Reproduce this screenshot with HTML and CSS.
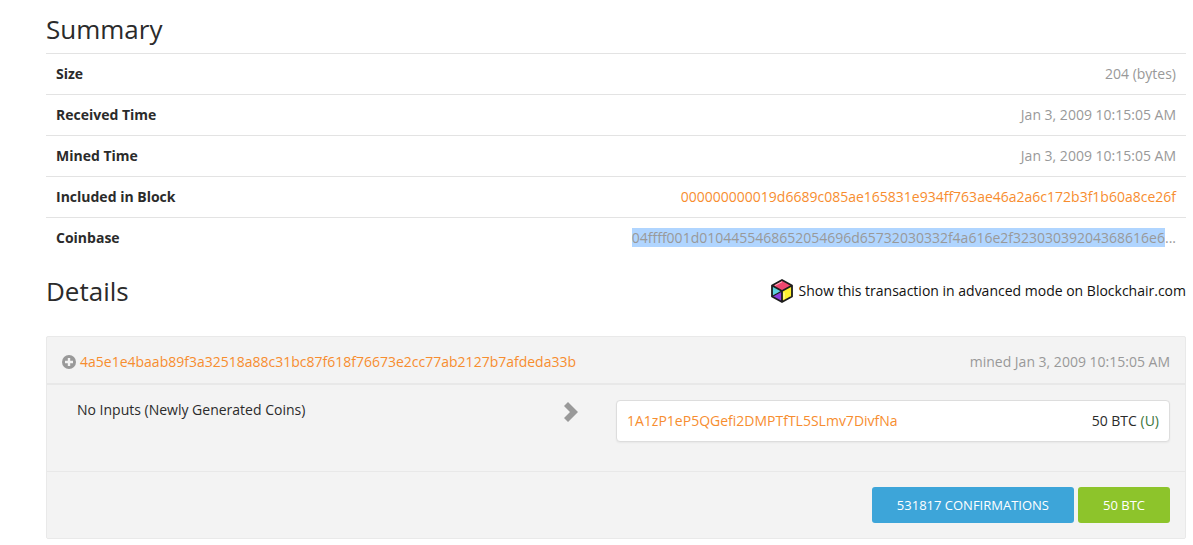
FILE: index.html
```
<!DOCTYPE html>
<html lang="en">
<head>
    <meta charset="UTF-8">
    <meta name="viewport" content="width=device-width, initial-scale=1.0">
    <title>Bitcoin Transaction</title>
    <link rel="stylesheet" href="styles.css">
</head>
<body>

    <h2>Summary</h2>
    <table class="summary">
        <tr>
            <th scope="row">Size</th>
            <td>204 (bytes)</td>
        </tr>
        <tr>
            <th scope="row">Received Time</th>
            <td>Jan 3, 2009 10:15:05 AM</td>
        </tr>
        <tr>
            <th scope="row">Mined Time</th>
            <td>Jan 3, 2009 10:15:05 AM</td>
        </tr>
        <tr>
            <th scope="row">Included in Block</th>
            <td><a href="#">000000000019d6689c085ae165831e934ff763ae46a2a6c172b3f1b60a8ce26f</a></td>
        </tr>
        <tr>
            <th scope="row">Coinbase</th>
            <td><span class="selected">04ffff001d0104455468652054696d65732030332f4a616e2f32303039204368616e6</span>...</td>
        </tr>
    </table>

    <div class="details-header">
        <h2>Details</h2>
        <a class="blockchair" href="#">
            <svg width="24" height="26" viewBox="0 0 24 26">
                <path d="M12 2 22 7.500 12 13 2 7.500Z" fill="#ef476f"/>
                <path d="M12 13 22 7.500V18.500L12 24Z" fill="#fff02e"/>
                <path d="M2 7.500 12 13 2 18.500Z" fill="#5fd3e0"/>
                <path d="M12 13V24L2 18.500Z" fill="#8b3fe0"/>
                <path d="M12 2 22 7.500V18.500L12 24 2 18.500V7.500Z M2 7.500 12 13 22 7.500 M12 13V24" fill="none" stroke="#1d1d1d" stroke-width="1.800" stroke-linejoin="round"/>
                <path d="M12 13 2 18.500" stroke="#1d1d1d" stroke-width="1.200"/>
                <path d="M5 7.500 12 3.800" stroke="#f9b3c3" stroke-width="1"/>
                <path d="M14 14.500V21" stroke="#fffbc0" stroke-width="1"/>
            </svg>
            Show this transaction in advanced mode on Blockchair.com
        </a>
    </div>

    <div class="tx">
        <div class="tx-header">
            <div class="tx-hash">
                <svg width="14" height="14" viewBox="0 0 14 14">
                    <circle cx="7" cy="7" r="7" fill="#999"/>
                    <path d="M7 3V11M3 7H11" stroke="#f3f3f3" stroke-width="2.400"/>
                </svg>
                <a href="#">4a5e1e4baab89f3a32518a88c31bc87f618f76673e2cc77ab2127b7afdeda33b</a>
            </div>
            <div class="tx-time">mined Jan 3, 2009 10:15:05 AM</div>
        </div>
        <div class="tx-body">
            <div class="inputs">
                <span>No Inputs (Newly Generated Coins)</span>
                <svg class="arrow" width="14" height="20" viewBox="0 0 14 20">
                    <path d="M4 0 14 10 4 20 0 16 6 10 0 4Z" fill="#999"/>
                </svg>
            </div>
            <div class="output">
                <a href="#">1A1zP1eP5QGefi2DMPTfTL5SLmv7DivfNa</a>
                <span>50 BTC <span class="unspent">(U)</span></span>
            </div>
        </div>
        <div class="tx-footer">
            <button class="btn btn-blue">531817 CONFIRMATIONS</button>
            <button class="btn btn-green">50 BTC</button>
        </div>
    </div>

</body>
</html>
```
FILE: styles.css
```
* {
    box-sizing: border-box;
}
body {
    margin: 0;
    padding: 9px 7px 0 46px;
    font-family: "Open Sans", sans-serif;
    font-size: 14px;
    line-height: 20px;
    color: #2b2b2b;
    background: #fff;
}
a {
    color: #f78d2f;
    text-decoration: none;
}
h2 {
    margin: 0;
    font-size: 26px;
    font-weight: 400;
    line-height: 40px;
}
svg {
    flex: none;
}
.summary {
    width: 100%;
    margin-top: 4px;
    border-collapse: separate;
    border-spacing: 0;
}
.summary th,
.summary td {
    padding: 10px;
    border-top: 1px solid #e3e3e3;
}
.summary th {
    text-align: left;
    font-weight: 700;
}
.summary td {
    text-align: right;
    color: #999;
}
.selected {
    background: #b0d5ff;
}
.details-header {
    display: flex;
    justify-content: space-between;
    align-items: center;
    margin: 13px 0 25px;
}
.blockchair {
    display: flex;
    align-items: center;
    gap: 5px;
    color: #111;
}
.tx {
    background: #f3f3f3;
    border: 1px solid #e9e9e9;
    border-radius: 2px;
}
.tx-header {
    display: flex;
    justify-content: space-between;
    padding: 15px 15px 11px;
    border-bottom: 2px solid #e8e8e8;
}
.tx-hash {
    display: flex;
    align-items: center;
    gap: 4px;
}
.tx-time {
    color: #999;
}
.tx-body {
    display: grid;
    grid-template-columns: 1fr 1fr;
    align-items: start;
    padding: 15px 15px 29px;
}
.inputs {
    display: flex;
    justify-content: space-between;
    padding: 0 38px 0 15px;
}
.arrow {
    margin-top: 2px;
}
.output {
    display: flex;
    justify-content: space-between;
    padding: 10px;
    background: #fff;
    border: 1px solid #ddd;
    border-radius: 4px;
    box-shadow: 0 1px 2px rgba(0, 0, 0, 0.05);
}
.unspent {
    color: #3c763d;
}
.tx-footer {
    display: flex;
    justify-content: flex-end;
    gap: 4px;
    padding: 15px;
    border-top: 1px solid #e8e8e8;
}
.btn {
    padding: 8px 25px;
    border: none;
    border-radius: 3px;
    color: #fff;
    font-family: inherit;
    font-size: 13px;
    line-height: 20px;
    cursor: pointer;
}
.btn-blue {
    background: #3da5d9;
}
.btn-green {
    background: #8dc42b;
}
```
